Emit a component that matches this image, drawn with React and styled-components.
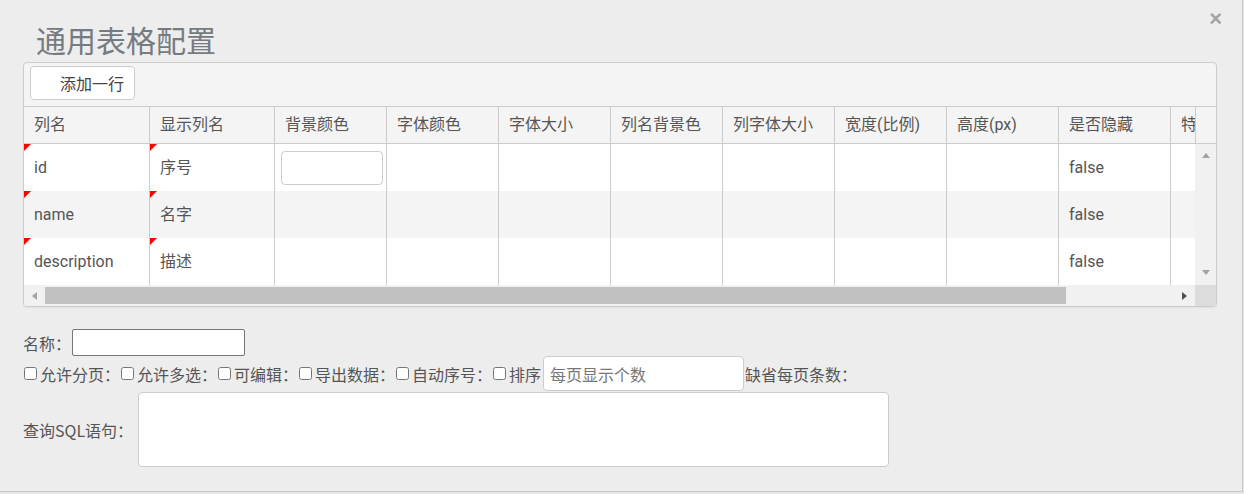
import React from "react";
import styled, { createGlobalStyle } from "styled-components";

const GlobalStyle = createGlobalStyle`
  html, body {
    margin: 0;
    padding: 0;
    background: #e6e6e6;
  }
  body {
    font-family: Roboto, "Noto Sans CJK SC", sans-serif;
    font-size: 16px;
    color: #555;
  }
`;

const Modal = styled.div`
  position: relative;
  width: 1243px;
  height: 492px;
  box-sizing: border-box;
  background: #ededed;
  border-right: 1px solid #c6c6c6;
  border-bottom: 1px solid #c6c6c6;
  padding: 0 25px 0 23px;
`;

const Title = styled.h2`
  margin: 0;
  padding: 21px 0 5px 13px;
  font-family: "Noto Sans CJK SC", sans-serif;
  font-size: 30px;
  line-height: 36px;
  font-weight: normal;
  color: #767b81;
`;

const Close = styled.span`
  position: absolute;
  top: 7px;
  right: 20px;
  font-family: "Liberation Sans", Arial, sans-serif;
  font-size: 22px;
  line-height: 24px;
  font-weight: bold;
  color: #a3a3a3;
  cursor: pointer;
`;

const Grid = styled.div`
  border: 1px solid #ccc;
  border-radius: 4px;
  background: #f4f4f4;
  overflow: hidden;
  box-shadow: 0 1px 2px rgba(0, 0, 0, 0.06);
`;

const Toolbar = styled.div`
  height: 44px;
  box-sizing: border-box;
  padding: 3px 6px;
  border-bottom: 1px solid #ccc;
`;

const AddButton = styled.button`
  height: 34px;
  padding: 0 10px 0 29px;
  border: 1px solid #ccc;
  border-radius: 4px;
  background: #fff;
  font-family: "Noto Sans CJK SC", sans-serif;
  font-size: 16px;
  color: #444;
`;

const HeadRow = styled.div`
  display: flex;
  height: 37px;
  box-sizing: border-box;
  border-bottom: 1px solid #ccc;
`;

const Viewport = styled.div`
  width: 1171px;
  flex: 0 0 1171px;
  overflow: hidden;
`;

const Track = styled.div`
  display: flex;
  width: max-content;
`;

const HeadGutter = styled.div`
  flex: 1;
  border-left: 1px solid #ccc;
`;

const HeadCell = styled.div`
  flex: 0 0 ${(p) => p.$w}px;
  box-sizing: border-box;
  border-right: 1px solid #ccc;
  padding-left: 10px;
  line-height: 36px;
  white-space: nowrap;
  overflow: hidden;
`;

const Body = styled.div`
  display: flex;
  height: 141px;
`;

const Row = styled.div`
  display: flex;
  height: 47px;
  background: ${(p) => (p.$alt ? "#f4f4f4" : "#fff")};
`;

const Cell = styled.div`
  position: relative;
  flex: 0 0 ${(p) => p.$w}px;
  height: 47px;
  box-sizing: border-box;
  border-right: 1px solid #ccc;
  padding-left: ${(p) => (p.$input ? 6 : 10)}px;
  display: flex;
  align-items: center;
  line-height: 20px;
  white-space: nowrap;
  overflow: hidden;
`;

const Mark = styled.span`
  position: absolute;
  top: 0;
  left: 0;
  width: 0;
  height: 0;
  border-top: 7px solid #f00;
  border-right: 7px solid transparent;
`;

const ColorInput = styled.input`
  width: 102px;
  height: 34px;
  box-sizing: border-box;
  border: 1px solid #ccc;
  border-radius: 4px;
  background: #fff;
  margin: 0;
`;

const VScroll = styled.div`
  flex: 1;
  background: #f1f1f1;
  display: flex;
  flex-direction: column;
  align-items: center;
  justify-content: space-between;
  padding: 9px 0 10px;
`;

const Arrow = styled.span`
  width: 0;
  height: 0;
  border-style: solid;
  border-color: transparent;
  ${(p) =>
    p.$dir === "up" &&
    `border-width: 0 4px 5px 4px; border-bottom-color: #a3a3a3;`}
  ${(p) =>
    p.$dir === "down" &&
    `border-width: 5px 4px 0 4px; border-top-color: #a3a3a3;`}
  ${(p) =>
    p.$dir === "left" &&
    `border-width: 4px 5px 4px 0; border-right-color: #a3a3a3;`}
  ${(p) =>
    p.$dir === "right" &&
    `border-width: 4px 0 4px 5px; border-left-color: #505050;`}
`;

const HScroll = styled.div`
  display: flex;
  height: 21px;
  background: #f1f1f1;
`;

const HButton = styled.div`
  flex: 0 0 21px;
  display: flex;
  align-items: center;
  justify-content: center;
`;

const HTrack = styled.div`
  flex: 0 0 1129px;
  display: flex;
  align-items: center;
`;

const Thumb = styled.div`
  height: 17px;
  width: 1021px;
  background: #c1c1c1;
`;

const Corner = styled.div`
  flex: 1;
  background: #dcdcdc;
`;

const Form = styled.div`
  padding-top: 22px;
`;

const FieldRow = styled.div`
  display: flex;
  align-items: center;
  white-space: nowrap;
  font-family: "Noto Sans CJK SC", sans-serif;
  margin-top: ${(p) => p.$top || 0}px;
`;

const Label = styled.span`
  display: inline-block;
  width: ${(p) => (p.$w ? `${p.$w}px` : "auto")};
`;

const NameInput = styled.input`
  width: 173px;
  height: 27px;
  box-sizing: border-box;
  border: 1px solid #767676;
  border-radius: 2px;
  background: #fff;
  margin: 0 0 0 1px;
`;

const Check = styled.input`
  width: 13px;
  height: 13px;
  margin: 0 3px 0 1px;
`;

const PageInput = styled.input`
  width: 201px;
  height: 35px;
  box-sizing: border-box;
  border: 1px solid #ccc;
  border-radius: 4px;
  padding: 0 6px;
  margin: 0 1px 0 2px;
  font-family: "Noto Sans CJK SC", sans-serif;
  font-size: 16px;
  background: #fff;
  &::placeholder {
    color: #777;
  }
`;

const SqlArea = styled.textarea`
  width: 751px;
  height: 75px;
  box-sizing: border-box;
  border: 1px solid #ccc;
  border-radius: 4px;
  background: #fff;
  resize: none;
  margin: 0;
`;

const columns = [
  { title: "列名", w: 126 },
  { title: "显示列名", w: 125 },
  { title: "背景颜色", w: 112 },
  { title: "字体颜色", w: 112 },
  { title: "字体大小", w: 112 },
  { title: "列名背景色", w: 112 },
  { title: "列字体大小", w: 112 },
  { title: "宽度(比例)", w: 112 },
  { title: "高度(px)", w: 112 },
  { title: "是否隐藏", w: 112 },
  { title: "特殊格式", w: 112 },
];

const rows = [
  { field: "id", label: "序号" },
  { field: "name", label: "名字" },
  { field: "description", label: "描述" },
];

const options = ["允许分页：", "允许多选：", "可编辑：", "导出数据：", "自动序号："];

export default function App() {
  return (
    <>
      <GlobalStyle />
      <Modal>
        <Title>通用表格配置</Title>
        <Close>×</Close>
        <Grid>
          <Toolbar>
            <AddButton>添加一行</AddButton>
          </Toolbar>
          <HeadRow>
            <Viewport>
              <Track>
                {columns.map((c) => (
                  <HeadCell key={c.title} $w={c.w}>
                    {c.title}
                  </HeadCell>
                ))}
              </Track>
            </Viewport>
            <HeadGutter />
          </HeadRow>
          <Body>
            <Viewport>
              {rows.map((r, i) => (
                <Row key={r.field} $alt={i === 1}>
                  <Track>
                    <Cell $w={columns[0].w}>
                      <Mark />
                      {r.field}
                    </Cell>
                    <Cell $w={columns[1].w}>
                      <Mark />
                      {r.label}
                    </Cell>
                    <Cell $w={112} $input>
                      {i === 0 && <ColorInput />}
                    </Cell>
                    {columns.slice(3, 9).map((c) => (
                      <Cell key={c.title} $w={c.w} />
                    ))}
                    <Cell $w={112}>false</Cell>
                    <Cell $w={112} />
                  </Track>
                </Row>
              ))}
            </Viewport>
            <VScroll>
              <Arrow $dir="up" />
              <Arrow $dir="down" />
            </VScroll>
          </Body>
          <HScroll>
            <HButton>
              <Arrow $dir="left" />
            </HButton>
            <HTrack>
              <Thumb />
            </HTrack>
            <HButton>
              <Arrow $dir="right" />
            </HButton>
            <Corner />
          </HScroll>
        </Grid>
        <Form>
          <FieldRow>
            <Label>名称：</Label>
            <NameInput />
          </FieldRow>
          <FieldRow>
            {options.map((o) => (
              <React.Fragment key={o}>
                <Check type="checkbox" />
                <Label>{o}</Label>
              </React.Fragment>
            ))}
            <Check type="checkbox" />
            <Label>排序</Label>
            <PageInput placeholder="每页显示个数" />
            <Label>缺省每页条数：</Label>
          </FieldRow>
          <FieldRow $top={1}>
            <Label $w={115}>查询SQL语句：</Label>
            <SqlArea />
          </FieldRow>
        </Form>
      </Modal>
    </>
  );
}
